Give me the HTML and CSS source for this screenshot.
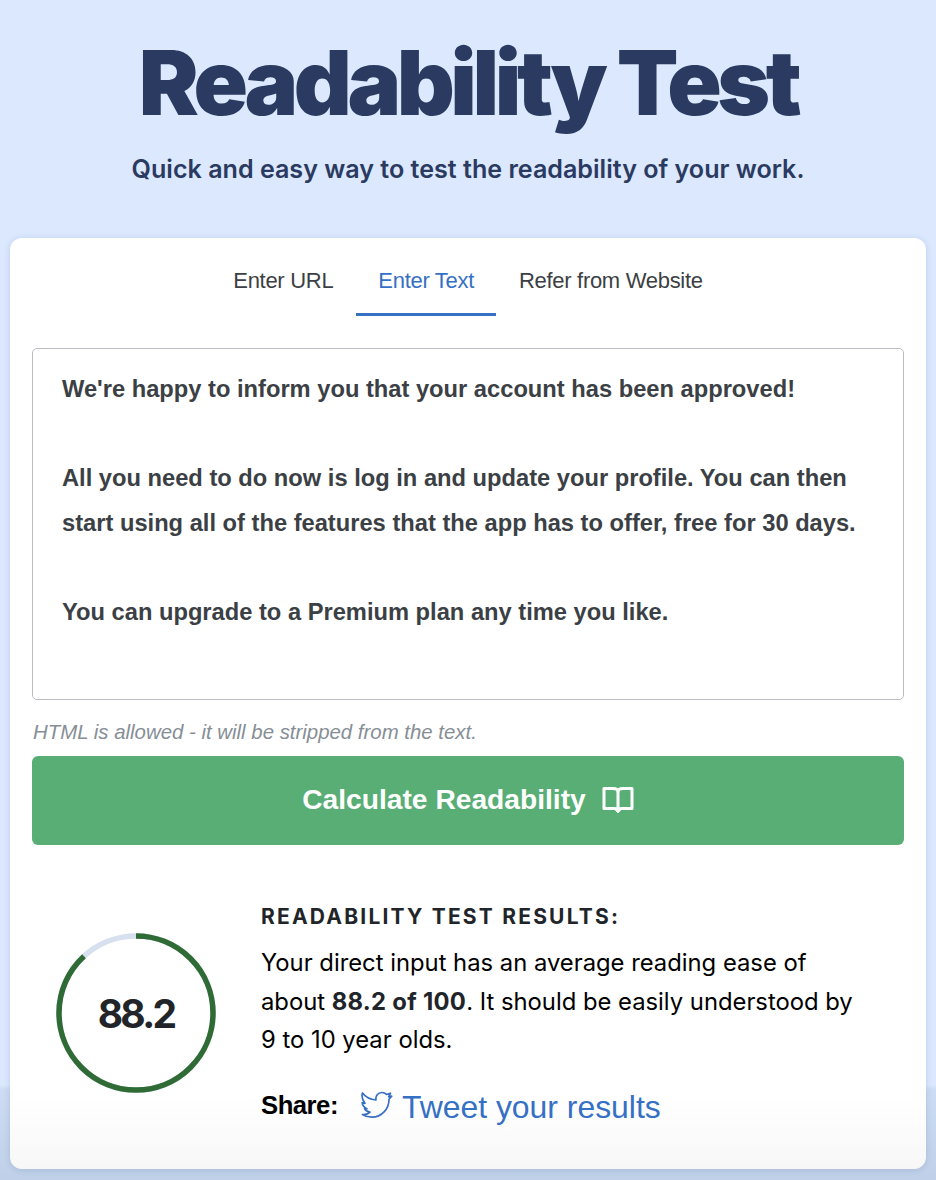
FILE: index.html
```html
<!DOCTYPE html>
<html lang="en">

<head>
    <meta charset="UTF-8">
    <title>Readability Test</title>
    <link rel="stylesheet" href="styles.css">
</head>

<body>
    <header class="hero">
        <h1>Readability Test</h1>
        <p class="tagline">Quick and easy way to test the readability of your work.</p>
    </header>
    <main class="card">
        <nav class="tabs">
            <a class="tab">Enter URL</a>
            <a class="tab active">Enter Text</a>
            <a class="tab">Refer from Website</a>
        </nav>
        <div class="textbox">
            <p>We're happy to inform you that your account has been approved!</p>
            <p>All you need to do now is log in and update your profile. You can then start using all of the features that the app has to offer, free for 30 days.</p>
            <p>You can upgrade to a Premium plan any time you like.</p>
        </div>
        <p class="hint">HTML is allowed - it will be stripped from the text.</p>
        <button class="calc">
            <span class="calc-label">Calculate Readability</span>
            <svg class="book" viewBox="0 0 32 28" width="32" height="28" fill="none" stroke="#fff" stroke-width="3" stroke-linejoin="round">
                <path d="M2 2.500h9c3 0 5 1 5 3 0-2 2-3 5-3h9v20h-10c-2 0-4 .3-4 1.500 0-1.200-2-1.500-4-1.500H2z" />
                <path d="M16 5v19" />
                <path d="M13.500 24h5l-2.500 3z" fill="#fff" stroke-width="1" />
            </svg>
        </button>
        <section class="results">
            <div class="gauge">
                <svg viewBox="0 0 160 160" width="160" height="160" fill="none" stroke-width="5.500">
                    <circle cx="80" cy="80" r="77" stroke="#d6e0ef" />
                    <circle class="gauge-bar" cx="80" cy="80" r="77" stroke="#2f6b35" pathLength="100" stroke-dasharray="88.2 100" />
                </svg>
                <span class="score">88.2</span>
            </div>
            <div class="summary">
                <h2>READABILITY TEST RESULTS:</h2>
                <p>Your direct input has an average reading ease of about <b>88.2 of 100</b>. It should be easily understood by 9 to 10 year olds.</p>
                <div class="share">
                    <b>Share:</b>
                    <a class="tweet">
                        <svg viewBox="0 0 32 28" width="32" height="28" fill="none" stroke="#3670c4" stroke-width="1.700" stroke-linejoin="round">
                            <path d="M1.500 2c3 4 7 6.500 13.500 7 -.8-4 2-7.500 6-7.500 2 0 3.500.8 4.500 2l4-1.300-1.800 3.600 3-.6-2.700 3c0 10-7.500 18-17 18-3.500 0-7-1-9.500-2.700 3 .3 6-.7 7.500-2.300-2.500-.2-4.500-1.500-5.500-3.500h2.500c-2.500-1-4.500-3.200-4.800-6l2.800.7C.8 8 .5 4.500 1.500 2z" />
                        </svg>
                        <span class="tweet-label">Tweet your results</span>
                    </a>
                </div>
            </div>
        </section>
    </main>
</body>

</html>
```

FILE: styles.css
```css
* {
    box-sizing: border-box;
}

html,
body {
    height: 100%;
}

body {
    margin: 0;
    padding: 0 10px;
    overflow: hidden;
    background: linear-gradient(#dbe8fe 0, #dbe8fe 1085px, #cddcf4 1090px, #bfd0e8 1180px);
    font-family: Inter, sans-serif;
}

.hero {
    height: 238px;
    padding-top: 33px;
    text-align: center;
    color: #2a3a60;
}

.hero h1 {
    margin: 0;
    font-size: 90px;
    line-height: 100px;
    font-weight: 900;
    letter-spacing: -4.450px;
}

.tagline {
    margin: 20px 0 0;
    font-size: 25.100px;
    line-height: 32px;
    font-weight: 600;
}

.card {
    height: 931px;
    padding: 0 22px;
    background: linear-gradient(#fff 0, #fff 860px, #f7f7f8 931px);
    border-radius: 12px;
    box-shadow: 0 1px 6px rgba(60, 90, 140, 0.2);
}

.tabs {
    display: flex;
    justify-content: center;
    height: 78px;
}

.tab {
    padding: 30px 22.500px 0;
    font-family: "Liberation Sans", Arial, sans-serif;
    font-size: 22px;
    letter-spacing: -0.300px;
    line-height: 26px;
    color: #3c3f44;
}

.tab.active {
    color: #3670c4;
    border-bottom: 3px solid #3670c4;
}

.textbox {
    height: 352px;
    margin-top: 32px;
    padding: 18px 29px;
    border: 1px solid #b9bdc2;
    border-radius: 5px;
    font-family: "Liberation Sans", Arial, sans-serif;
    font-size: 23.700px;
    font-weight: 700;
    line-height: 44.500px;
    color: #3b4045;
}

.textbox p {
    margin: 0 0 44.500px;
}

.hint {
    margin: 19px 0 11px;
    padding-left: 1px;
    font-family: "Liberation Sans", Arial, sans-serif;
    font-size: 20.400px;
    font-style: italic;
    line-height: 26px;
    color: #868e96;
}

.calc {
    display: flex;
    align-items: center;
    justify-content: center;
    gap: 16px;
    width: 100%;
    height: 89px;
    padding-bottom: 2px;
    border: none;
    border-radius: 6px;
    background-color: #58ae75;
    color: #fff;
    font-family: "Liberation Sans", Arial, sans-serif;
    font-size: 28.200px;
    font-weight: 700;
}

.calc-label {
    margin-bottom: 2px;
}

.results {
    display: flex;
    margin-top: 57px;
}

.gauge {
    position: relative;
    flex: none;
    width: 160px;
    height: 160px;
    margin: 31px 45px 0 24px;
}

.gauge-bar {
    transform: rotate(-90deg);
    transform-origin: center;
}

.score {
    position: absolute;
    inset: 0;
    display: flex;
    align-items: center;
    justify-content: center;
    font-size: 39px;
    font-weight: 700;
    letter-spacing: -2.700px;
    color: #212529;
}

.summary {
    width: 600px;
}

.summary h2 {
    margin: 0 0 12px;
    font-size: 21px;
    line-height: 30px;
    font-weight: 700;
    letter-spacing: 2.200px;
    color: #212529;
}

.summary p {
    margin: 0;
    font-size: 23.800px;
    line-height: 38.500px;
    color: #000;
}

.summary p b {
    letter-spacing: 0.300px;
    color: #212529;
}

.share {
    display: flex;
    align-items: center;
    margin-top: 25px;
    font-family: "Liberation Sans", Arial, sans-serif;
    font-size: 25.700px;
    letter-spacing: -0.500px;
}

.tweet {
    display: flex;
    align-items: center;
    gap: 9px;
    margin-left: 23px;
    font-size: 31.900px;
    letter-spacing: 0;
    color: #3670c4;
}

.tweet-label {
    margin-top: 4px;
}
```
